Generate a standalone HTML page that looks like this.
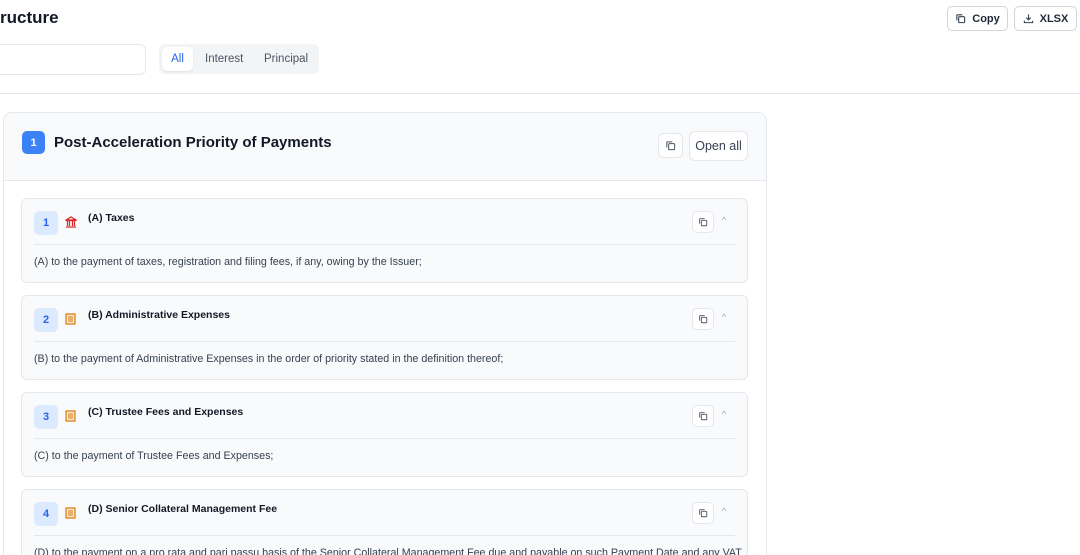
<!DOCTYPE html>
<html><head><meta charset="utf-8"><style>
*{box-sizing:border-box;margin:0;padding:0}
html,body{width:1080px;height:555px;overflow:hidden}
body{background:#fff;font-family:"Liberation Sans",sans-serif;color:#111827;position:relative}
.abs{position:absolute}
.btn{position:absolute;border:1px solid #d1d5db;border-radius:5px;background:#fff;display:flex;align-items:center;justify-content:center;font-size:11px;color:#1f2937;font-weight:bold}
.card{position:absolute;left:21px;width:727px;height:85px;border:1px solid #e5e7eb;border-radius:6px;background:#f9fafb}
.num{position:absolute;left:12px;top:12px;width:24px;height:24px;border-radius:5px;background:#dbeafe;color:#2563eb;font-size:11px;font-weight:bold;display:flex;align-items:center;justify-content:center}
.ic{position:absolute;left:43px;top:17px}
.tt{position:absolute;left:66px;top:13px;font-size:10.5px;font-weight:bold}
.dv{position:absolute;left:12px;right:12px;top:45px;border-top:1px solid #e5e7eb}
.tx{position:absolute;left:12px;top:57px;font-size:10.7px;color:#374151;white-space:nowrap}
.cp{position:absolute;left:670px;top:12px;width:22px;height:22px;border:1px solid #e5e7eb;border-radius:5px;background:#fff;display:flex;align-items:center;justify-content:center}
.ch{position:absolute;left:700px;top:16px;font-size:9px;color:#9ca3af}
</style></head><body>
<div class="abs" style="left:0;top:8px;font-size:17px;font-weight:bold">ructure</div>
<div class="btn" style="left:947px;top:6px;width:61px;height:25px"><svg width="11" height="11" viewBox="0 0 12 12" style="margin-right:6px"><rect x="4" y="4" width="6.5" height="6.5" rx="1" fill="none" stroke="#374151" stroke-width="1.2"/><path d="M2 8V2.5A.5.5 0 0 1 2.5 2H8" fill="none" stroke="#374151" stroke-width="1.2"/></svg>Copy</div>
<div class="btn" style="left:1014px;top:6px;width:63px;height:25px"><svg width="11" height="11" viewBox="0 0 12 12" style="margin-right:6px"><path d="M6 1.5v6M3.5 5l2.5 2.5L8.5 5M1.5 8.5v2h9v-2" fill="none" stroke="#374151" stroke-width="1.2"/></svg>XLSX</div>
<div class="abs" style="left:-10px;top:44px;width:156px;height:31px;border:1px solid #e5e7eb;border-radius:6px"></div>
<div class="abs" style="left:159px;top:44px;width:160px;height:30px;background:#f3f4f6;border-radius:6px"></div>
<div class="abs" style="left:162px;top:47px;width:31px;height:24px;background:#fff;border-radius:5px;box-shadow:0 1px 2px rgba(0,0,0,.08);color:#2563eb;font-size:11.5px;display:flex;align-items:center;justify-content:center">All</div>
<div class="abs" style="left:205px;top:53px;font-size:11.5px;color:#4b5563">Interest</div>
<div class="abs" style="left:264px;top:53px;font-size:11.5px;color:#4b5563">Principal</div>
<div class="abs" style="left:0;top:93px;width:1080px;border-top:1px solid #e5e7eb"></div>
<div class="abs" style="left:3px;top:112px;width:764px;height:460px;border:1px solid #e5e7eb;border-radius:9px;background:#fff;overflow:hidden">
 <div style="height:68px;background:#f9fafb;border-bottom:1px solid #e5e7eb"></div>
</div>
<div class="abs" style="left:22px;top:131px;width:23px;height:23px;background:#3b82f6;border-radius:5px;color:#fff;font-size:11px;font-weight:bold;display:flex;align-items:center;justify-content:center">1</div>
<div class="abs" style="left:54px;top:134px;font-size:15px;font-weight:bold">Post-Acceleration Priority of Payments</div>
<div class="abs" style="left:658px;top:133px;width:25px;height:25px;border:1px solid #e5e7eb;border-radius:6px;background:#fff;display:flex;align-items:center;justify-content:center"><svg width="11" height="11" viewBox="0 0 12 12"><rect x="4" y="4" width="6.5" height="6.5" rx="1" fill="none" stroke="#4b5563" stroke-width="1.1"/><path d="M2 8V2.5A.5.5 0 0 1 2.5 2H8" fill="none" stroke="#4b5563" stroke-width="1.1"/></svg></div>
<div class="abs" style="left:689px;top:131px;width:59px;height:30px;border:1px solid #e5e7eb;border-radius:6px;background:#fff;font-size:12.5px;color:#374151;display:flex;align-items:center;justify-content:center">Open all</div>

<div class="card" style="top:198px"><div class="num">1</div>
<svg class="ic" width="12" height="12" viewBox="0 0 12 12"><path d="M1 4L6 1l5 3zM1 11h10M2.5 5v5M4.5 5v5M7.5 5v5M9.5 5v5M1 4.5h10" fill="none" stroke="#dc2626" stroke-width="1.2"/></svg>
<div class="tt">(A) Taxes</div><div class="cp"><svg width="10" height="10" viewBox="0 0 12 12"><rect x="4" y="4" width="6.5" height="6.5" rx="1" fill="none" stroke="#4b5563" stroke-width="1.1"/><path d="M2 8V2.5A.5.5 0 0 1 2.5 2H8" fill="none" stroke="#4b5563" stroke-width="1.1"/></svg></div><div class="ch">^</div>
<div class="dv"></div><div class="tx">(A) to the payment of taxes, registration and filing fees, if any, owing by the Issuer;</div></div>

<div class="card" style="top:295px"><div class="num">2</div>
<svg class="ic" width="11" height="12" viewBox="0 0 11 12"><rect x="1" y="1" width="9" height="10" fill="#fde7cf" stroke="#d97706" stroke-width="1.2"/><path d="M3 4h5M3 6h5M3 8h5" stroke="#d97706"/></svg>
<div class="tt">(B) Administrative Expenses</div><div class="cp"><svg width="10" height="10" viewBox="0 0 12 12"><rect x="4" y="4" width="6.5" height="6.5" rx="1" fill="none" stroke="#4b5563" stroke-width="1.1"/><path d="M2 8V2.5A.5.5 0 0 1 2.5 2H8" fill="none" stroke="#4b5563" stroke-width="1.1"/></svg></div><div class="ch">^</div>
<div class="dv"></div><div class="tx">(B) to the payment of Administrative Expenses in the order of priority stated in the definition thereof;</div></div>

<div class="card" style="top:392px"><div class="num">3</div>
<svg class="ic" width="11" height="12" viewBox="0 0 11 12"><rect x="1" y="1" width="9" height="10" fill="#fde7cf" stroke="#d97706" stroke-width="1.2"/><path d="M3 4h5M3 6h5M3 8h5" stroke="#d97706"/></svg>
<div class="tt">(C) Trustee Fees and Expenses</div><div class="cp"><svg width="10" height="10" viewBox="0 0 12 12"><rect x="4" y="4" width="6.5" height="6.5" rx="1" fill="none" stroke="#4b5563" stroke-width="1.1"/><path d="M2 8V2.5A.5.5 0 0 1 2.5 2H8" fill="none" stroke="#4b5563" stroke-width="1.1"/></svg></div><div class="ch">^</div>
<div class="dv"></div><div class="tx">(C) to the payment of Trustee Fees and Expenses;</div></div>

<div class="card" style="top:489px;height:100px"><div class="num">4</div>
<svg class="ic" width="11" height="12" viewBox="0 0 11 12"><rect x="1" y="1" width="9" height="10" fill="#fde7cf" stroke="#d97706" stroke-width="1.2"/><path d="M3 4h5M3 6h5M3 8h5" stroke="#d97706"/></svg>
<div class="tt">(D) Senior Collateral Management Fee</div><div class="cp"><svg width="10" height="10" viewBox="0 0 12 12"><rect x="4" y="4" width="6.5" height="6.5" rx="1" fill="none" stroke="#4b5563" stroke-width="1.1"/><path d="M2 8V2.5A.5.5 0 0 1 2.5 2H8" fill="none" stroke="#4b5563" stroke-width="1.1"/></svg></div><div class="ch">^</div>
<div class="dv"></div><div class="tx">(D) to the payment on a pro rata and pari passu basis of the Senior Collateral Management Fee due and payable on such Payment Date and any VAT</div></div>
</body></html>
